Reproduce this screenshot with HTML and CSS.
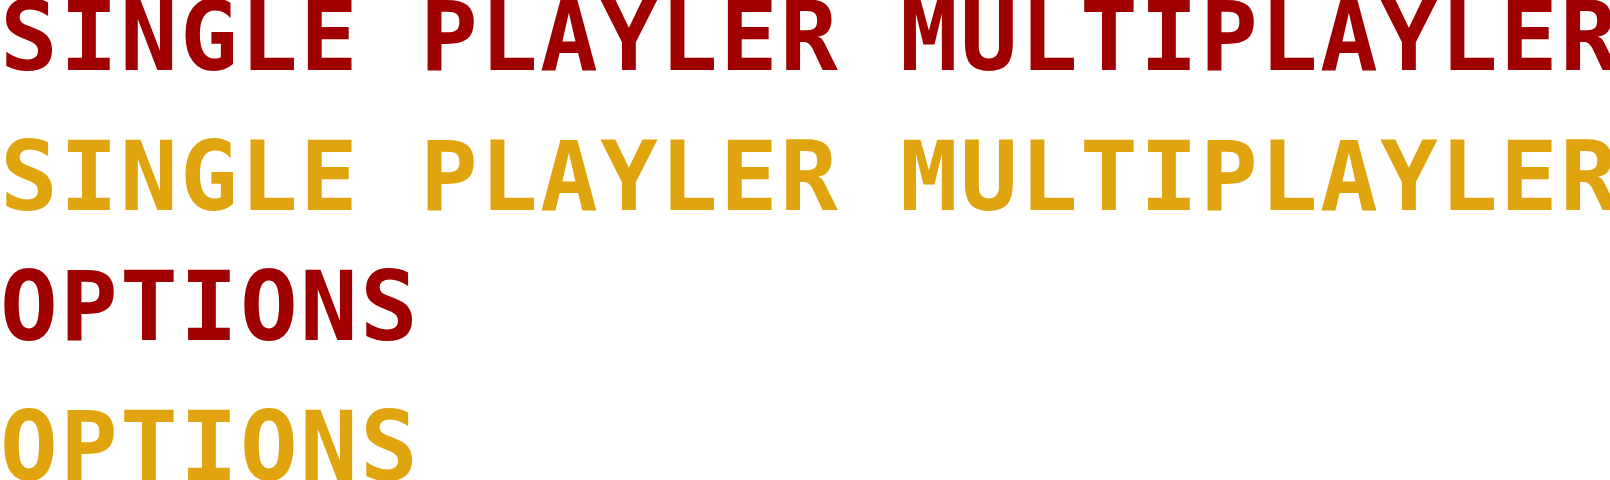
FILE: index.html
```html
<!DOCTYPE html>
<html>
    <head>
        <meta charset="utf-8">
        <title>Menu</title>
        <link rel="stylesheet" href="styles.css">
    </head>
    <body>
        <div class="menu">
            <div class="menuItem">
                <div class="label">SINGLE PLAYLER MULTIPLAYLER</div>
                <div class="label hover">SINGLE PLAYLER MULTIPLAYLER</div>
            </div>
            <div class="menuItem">
                <div class="label">OPTIONS</div>
                <div class="label hover">OPTIONS</div>
            </div>
        </div>
    </body>
</html>
```

FILE: styles.css
```css
  body {
      margin: 0;
      background-color: white;
      overflow: hidden;
  }

  .menu {
      display: flex;
      flex-direction: column;
      gap: 60px;
      padding-top: 2px;
  }

  .menuItem {
      display: flex;
      flex-direction: column;
      gap: 70px;
  }

  .label {
      font-family: 'DejaVu Sans Mono', 'Liberation Mono', monospace;
      font-size: 96px;
      font-weight: bold;
      letter-spacing: 2.2px;
      line-height: 70px;
      height: 70px;
      white-space: nowrap;
      color: rgb(160, 0, 0);
  }

  /* highlighted state */
  .hover {
      color: rgb(224, 165, 14);
  }
```
